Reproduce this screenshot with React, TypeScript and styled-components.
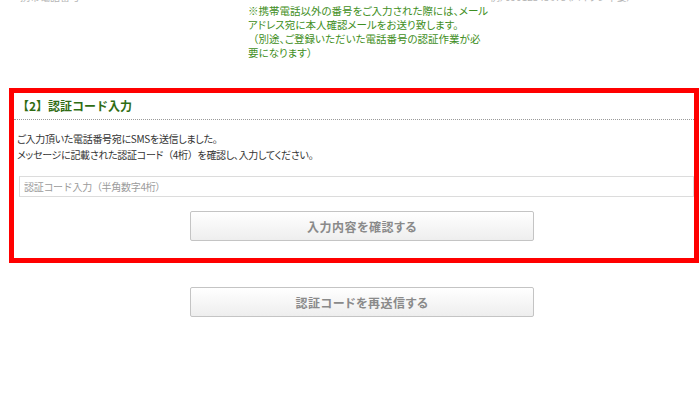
import React from "react";
import styled, { createGlobalStyle } from "styled-components";

const GlobalStyle = createGlobalStyle`
  html, body {
    margin: 0;
    padding: 0;
    background: #ffffff;
  }
  body {
    font-family: "Noto Sans CJK JP", "Noto Sans", sans-serif;
    color: #333333;
  }
`;

const Page = styled.div`
  width: 700px;
  height: 400px;
  overflow: hidden;
  background: #ffffff;
`;

const TopStrip = styled.div`
  height: 4px;
  overflow: hidden;
  display: flex;
  align-items: flex-end;
`;

const FaintLabel = styled.span<{ $left: number; $width: number }>`
  margin-left: ${(p) => p.$left}px;
  width: ${(p) => p.$width}px;
  flex: none;
  font-size: 10px;
  line-height: 14px;
  color: #b5b5b5;
  white-space: nowrap;
  overflow: hidden;
  font-feature-settings: "palt";
`;

const Note = styled.p`
  margin: 0 0 0 248px;
  font-size: 10.5px;
  line-height: 14px;
  color: #3e8e22;
  white-space: nowrap;
  font-feature-settings: "palt";
`;

const Highlight = styled.section`
  box-sizing: border-box;
  margin: 28px 0 0 9px;
  width: 690px;
  height: 175px;
  border: 5px solid #ff0000;
  background: #ffffff;
`;

const SectionTitle = styled.h2`
  margin: 0;
  padding: 4px 0 4px 3px;
  font-size: 12px;
  line-height: 18px;
  font-weight: bold;
  color: #2f6c13;
  border-bottom: 1px dotted #9a9a9a;
`;

const Intro = styled.p`
  margin: 11px 0 0 3px;
  font-size: 10px;
  line-height: 16px;
  letter-spacing: -0.3px;
  color: #333333;
  white-space: nowrap;
  font-feature-settings: "palt";
`;

const Paren = styled.span`
  font-feature-settings: normal;
`;

const CodeInput = styled.input`
  display: block;
  box-sizing: border-box;
  margin: 13px 0 0 5px;
  width: 675px;
  height: 21px;
  padding: 0 4px;
  border: 1px solid #dcdcdc;
  border-radius: 0;
  background: #ffffff;
  font-family: "Noto Sans CJK JP", sans-serif;
  font-size: 10px;
  letter-spacing: -0.3px;
  outline: none;
  &::placeholder {
    color: #9b9b9b;
  }
`;

const ButtonRow = styled.div<{ $top: number; $left: number }>`
  display: flex;
  margin-top: ${(p) => p.$top}px;
  padding-left: ${(p) => p.$left}px;
`;

const ActionButton = styled.button`
  box-sizing: border-box;
  width: 344px;
  height: 30px;
  border: 1px solid #c4c4c4;
  border-radius: 2px;
  background: linear-gradient(#ffffff, #eeeeee);
  color: #8a8a8a;
  font-family: "Noto Sans CJK JP", sans-serif;
  font-size: 12px;
  font-weight: bold;
  letter-spacing: 0.5px;
  font-feature-settings: "palt";
  cursor: pointer;
  padding: 0;
`;

export default function App() {
  return (
    <>
      <GlobalStyle />
      <Page>
        <TopStrip>
          <FaintLabel $left={20} $width={62}>携帯電話番号</FaintLabel>
          <FaintLabel $left={408} $width={152}>例）09012345678（ハイフン不要）</FaintLabel>
        </TopStrip>
        <Note>
          ※携帯電話以外の番号をご入力された際には、メール
          <br />
          アドレス宛に本人確認メールをお送り致します。
          <br />
          <Paren>（</Paren>別途、ご登録いただいた電話番号の認証作業が必
          <br />
          要になります<Paren>）</Paren>
        </Note>
        <Highlight>
          <SectionTitle>【2】認証コード入力</SectionTitle>
          <Intro>
            ご入力頂いた電話番号宛にSMSを送信しました。
            <br />
            メッセージに記載された認証コード<Paren>（</Paren>4桁<Paren>）</Paren>を確認し、入力してください。
          </Intro>
          <CodeInput type="text" placeholder="認証コード入力（半角数字4桁）" />
          <ButtonRow $top={14} $left={176}>
            <ActionButton type="button">入力内容を確認する</ActionButton>
          </ButtonRow>
        </Highlight>
        <ButtonRow $top={24} $left={190}>
          <ActionButton type="button">認証コードを再送信する</ActionButton>
        </ButtonRow>
      </Page>
    </>
  );
}
